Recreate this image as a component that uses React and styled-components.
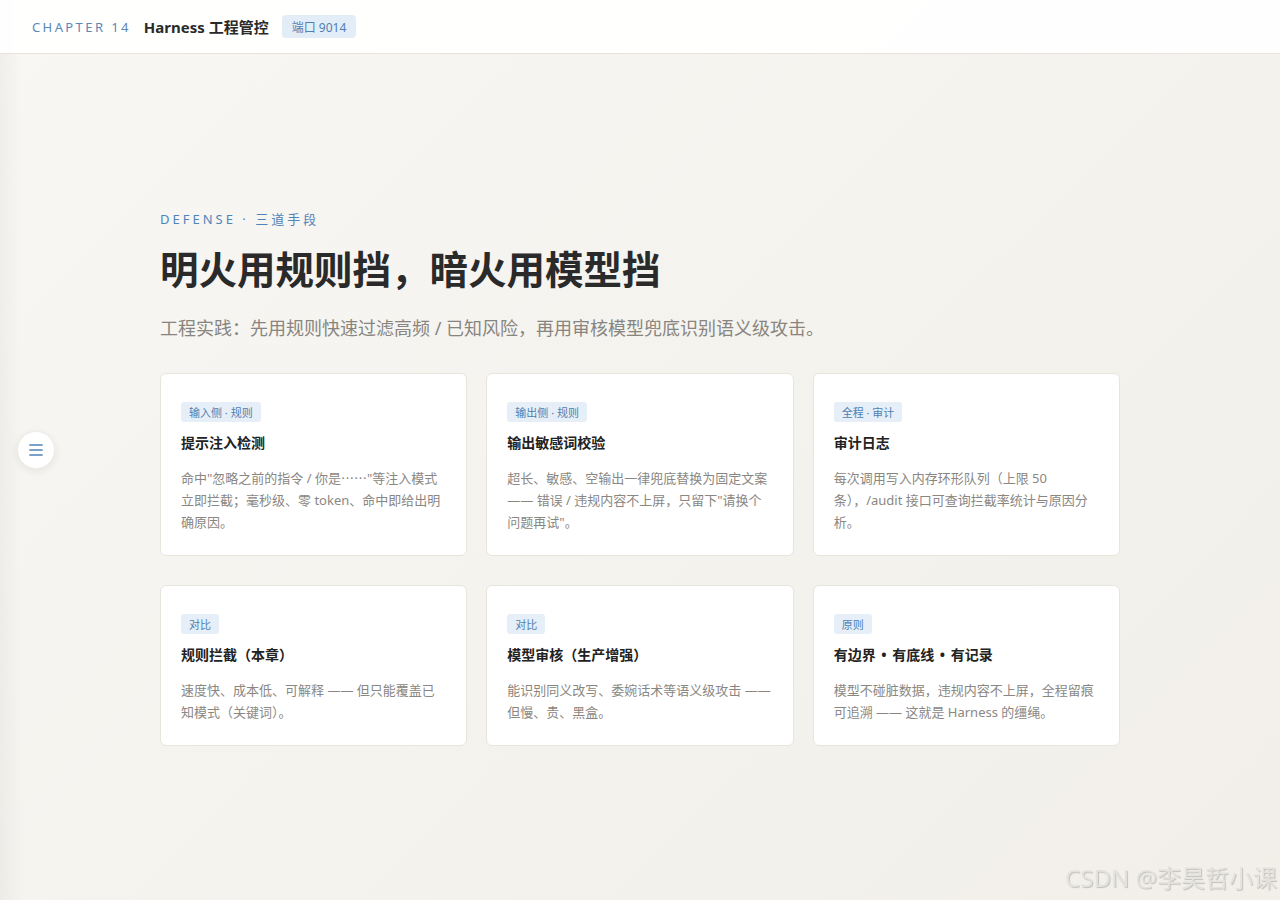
import styled, { createGlobalStyle } from 'styled-components'

const GlobalStyle = createGlobalStyle`
   html, body {
      margin: 0;
      padding: 0;
   }
   body {
      min-height: 900px;
      font-family: "Noto Sans", "Noto Sans CJK SC", sans-serif;
      background: linear-gradient(135deg, #f8f7f4 0%, #f4f2ed 60%, #f1efe8 100%);
      color: #2a2a2a;
   }
`

const cards = [
   {
      tag: '输入侧 · 规则',
      title: '提示注入检测',
      body: '命中"忽略之前的指令 / 你是……"等注入模式立即拦截；毫秒级、零 token、命中即给出明确原因。',
   },
   {
      tag: '输出侧 · 规则',
      title: '输出敏感词校验',
      body: '超长、敏感、空输出一律兜底替换为固定文案 —— 错误 / 违规内容不上屏，只留下"请换个问题再试"。',
   },
   {
      tag: '全程 · 审计',
      title: '审计日志',
      body: '每次调用写入内存环形队列（上限 50 条），/audit 接口可查询拦截率统计与原因分析。',
   },
   {
      tag: '对比',
      title: '规则拦截（本章）',
      body: '速度快、成本低、可解释 —— 但只能覆盖已知模式（关键词）。',
   },
   {
      tag: '对比',
      title: '模型审核（生产增强）',
      body: '能识别同义改写、委婉话术等语义级攻击 —— 但慢、贵、黑盒。',
   },
   {
      tag: '原则',
      title: '有边界 • 有底线 • 有记录',
      body: '模型不碰脏数据，违规内容不上屏，全程留痕可追溯 —— 这就是 Harness 的缰绳。',
   },
]

// the ellipsis is set full-width, as the CJK face draws it
const renderBody = (text) =>
   text.split(/(……)/).map((part, i) =>
      part === '……' ? <Ellipsis key={i}>{part}</Ellipsis> : part
   )

const App = () => {
   return (
      <Page>
         <GlobalStyle />
         <Header>
            <Chapter>CHAPTER 14</Chapter>
            <HeaderTitle>Harness 工程管控</HeaderTitle>
            <PortBadge>端口 9014</PortBadge>
         </Header>

         <Main>
            <Eyebrow>DEFENSE · 三道手段</Eyebrow>
            <Title>明火用规则挡，暗火用模型挡</Title>
            <Subtitle>
               工程实践：先用规则快速过滤高频 / 已知风险，再用审核模型兜底识别语义级攻击。
            </Subtitle>

            <CardGrid>
               {cards.map((c, i) => (
                  <Card key={i}>
                     <Tag>{c.tag}</Tag>
                     <CardTitle>{c.title}</CardTitle>
                     <CardBody>{renderBody(c.body)}</CardBody>
                  </Card>
               ))}
            </CardGrid>
         </Main>

         <MenuButton aria-label="menu">
            <svg width="16" height="14" viewBox="0 0 16 14">
               <path
                  d="M2 2h12M2 7h12M2 12h12"
                  stroke="#4f82b8"
                  strokeWidth="1.7"
                  strokeLinecap="round"
               />
            </svg>
         </MenuButton>

         <Watermark>CSDN @李昊哲小课</Watermark>
      </Page>
   )
}

const Page = styled.div`
   min-height: 900px;
   position: relative;
   background: linear-gradient(90deg, rgba(0, 0, 0, 0.035) 0px, rgba(0, 0, 0, 0) 22px);
`

const Header = styled.header`
   height: 53px;
   display: flex;
   align-items: center;
   padding: 0 32px;
   background: rgba(255, 255, 255, 0.92);
   border-bottom: 1px solid #e6e3da;
`

const Chapter = styled.span`
   font-size: 13px;
   letter-spacing: 2.4px;
   color: #5b87b5;
   margin-right: 13px;
`

const HeaderTitle = styled.span`
   font-size: 15px;
   font-weight: 700;
   color: #2a2a2a;
   margin-right: 13px;
`

const PortBadge = styled.span`
   display: inline-flex;
   align-items: center;
   height: 23px;
   padding: 0 10px;
   border-radius: 4px;
   background: #e3edf7;
   color: #4f7fb3;
   font-size: 12px;
`

const Main = styled.main`
   width: 960px;
   margin: 0 auto;
   padding-top: 156px;
   display: flex;
   flex-direction: column;
`

const Eyebrow = styled.div`
   font-size: 13px;
   line-height: 18px;
   letter-spacing: 3px;
   color: #4f84ba;
`

const Title = styled.h1`
   margin: 16px 0 0;
   font-size: 38.5px;
   line-height: 50px;
   font-weight: 700;
   color: #2a2a2a;
`

const Subtitle = styled.p`
   margin: 20px 0 0;
   font-size: 18px;
   line-height: 28px;
   color: #888580;
`

const CardGrid = styled.div`
   margin-top: 31px;
   display: grid;
   grid-template-columns: repeat(3, 1fr);
   column-gap: 19px;
   row-gap: 29px;
`

const Card = styled.div`
   background: #ffffff;
   border: 1px solid #e8e5dc;
   border-radius: 6px;
   padding: 28px 20px 22px;
   display: flex;
   flex-direction: column;
   align-items: flex-start;
`

const Tag = styled.span`
   display: inline-flex;
   align-items: center;
   height: 20px;
   padding: 0 8px;
   border-radius: 3px;
   background: #e6eef7;
   color: #4f7fb3;
   font-size: 11px;
`

const CardTitle = styled.h3`
   margin: 11px 0 0;
   font-size: 14px;
   line-height: 20px;
   font-weight: 700;
   color: #222222;
   word-spacing: 2px;
`

const CardBody = styled.p`
   margin: 14px 0 0;
   font-size: 13px;
   line-height: 22px;
   color: #8a8782;
`

const Ellipsis = styled.span`
   font-family: "Noto Sans CJK SC", sans-serif;
`

const MenuButton = styled.button`
   position: fixed;
   left: 17px;
   top: 431px;
   width: 38px;
   height: 38px;
   border-radius: 50%;
   border: 1px solid #eeece6;
   background: #ffffff;
   box-shadow: 0 2px 8px rgba(0, 0, 0, 0.08);
   display: flex;
   align-items: center;
   justify-content: center;
   padding: 0;
   cursor: pointer;
`

const Watermark = styled.div`
   position: fixed;
   right: 3px;
   bottom: 6px;
   font-size: 24px;
   color: #e4e2dd;
   text-shadow: 1px 1px 1px rgba(0, 0, 0, 0.2);
   pointer-events: none;
`

export default App
